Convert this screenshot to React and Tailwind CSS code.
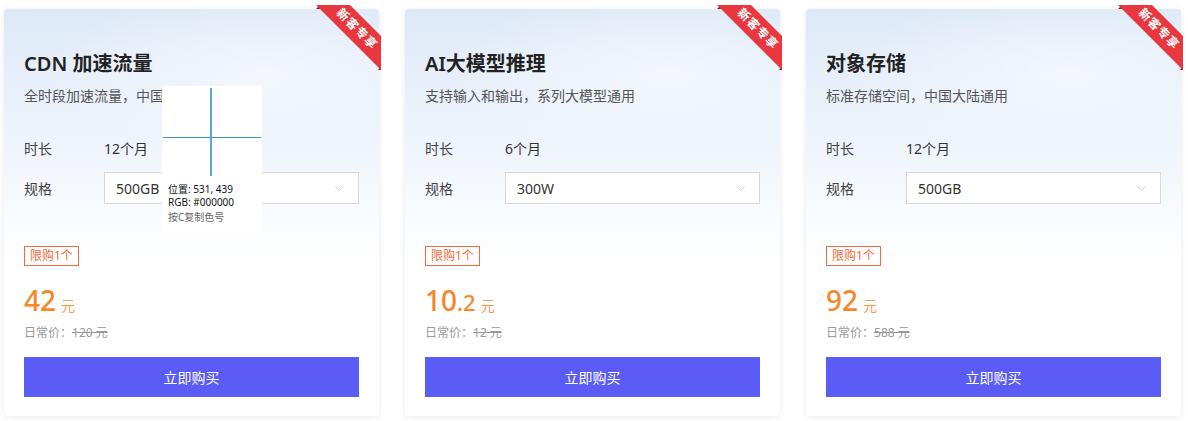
import { ChevronDown } from "lucide-react"

const plans = [
  { title: "CDN 加速流量", desc: "全时段加速流量，中国大陆通用", term: "12个月", spec: "500GB", price: "42", decimal: "", original: "120 元" },
  { title: "AI大模型推理", desc: "支持输入和输出，系列大模型通用", term: "6个月", spec: "300W", price: "10", decimal: ".2", original: "12 元" },
  { title: "对象存储", desc: "标准存储空间，中国大陆通用", term: "12个月", spec: "500GB", price: "92", decimal: "", original: "588 元" },
]

const Ribbon = () => (
  <div className="absolute -top-[4px] -right-[2px] w-[65px] h-[65px] overflow-hidden">
    <div className="absolute left-0 top-0 w-0 h-0 border-l-[4px] border-l-transparent border-b-[4px] border-b-[#9b1a1a]" />
    <div className="absolute right-0 bottom-0 w-0 h-0 border-t-[4px] border-t-transparent border-r-[3px] border-r-[#9b1a1a]" />
    <div className="absolute left-[-9px] top-[12px] w-[100px] h-[24px] rotate-45 bg-[#e8373e] flex items-center justify-center text-white text-[12px] font-bold tracking-[1px] leading-none">
      新客专享
    </div>
  </div>
)

function PlanCard({ plan }) {
  return (
    <div className="relative w-[375px] h-[407px] rounded-[4px] bg-white shadow-[0_1px_6px_rgba(0,0,0,0.09)]">
      <div className="absolute inset-0 rounded-[4px] bg-linear-to-b from-[#dde9f8] from-0% via-[#f0f5fc] via-35% to-white to-62%" />
      <div className="absolute inset-x-0 top-0 h-[160px] bg-[radial-gradient(ellipse_at_70%_40%,rgba(255,255,255,0.55),transparent_60%)]" />
      <Ribbon />
      <div className="relative px-[20px] pt-[41px] pb-[19px] flex flex-col">
        <h2 className="text-[20px] leading-[28px] font-semibold text-[#222]">{plan.title}</h2>
        <p className="mt-[8px] text-[14px] leading-[20px] text-[#555]">{plan.desc}</p>

        <div className="mt-[26px] flex items-center h-[32px] text-[14px] text-[#333]">
          <span className="w-[80px] text-[#444]">时长</span>
          <span>{plan.term}</span>
        </div>
        <div className="mt-[8px] flex items-center h-[32px] text-[14px] text-[#333]">
          <span className="w-[80px] text-[#444]">规格</span>
          <div className="flex-1 h-[32px] border border-[#d9d9d9] bg-white flex items-center justify-between pl-[11px] pr-[11px]">
            <span>{plan.spec}</span>
            <ChevronDown size={15} strokeWidth={1.2} className="text-[#bbb]" />
          </div>
        </div>

        <div className="mt-[42px] flex">
          <span className="h-[20px] px-[5px] border border-[#f06a3c] text-[#f06a3c] text-[12px] leading-[18px]">限购1个</span>
        </div>

        <div className="mt-[16px] h-[36px] flex items-baseline text-[#f5862b]">
          <span className="text-[28px] leading-[36px] font-medium">{plan.price}</span>
          {plan.decimal && <span className="text-[22px] font-medium">{plan.decimal}</span>}
          <span className="ml-[5px] text-[14px] text-[#f59a52]">元</span>
        </div>
        <div className="mt-[6px] text-[12px] leading-[18px] text-[#999]">
          日常价：<span className="line-through">{plan.original}</span>
        </div>

        <button className="mt-[15px] h-[40px] w-full bg-[#5b5bf6] text-white text-[14px]">立即购买</button>
      </div>
    </div>
  )
}

export default function App() {
  return (
    <div
      className="relative w-[1188px] h-[421px] bg-white pl-[4px] pt-[9px] flex gap-[26px]"
      style={{ fontFamily: '"Noto Sans", "Noto Sans CJK SC", sans-serif' }}
    >
      {plans.map((p) => (
        <PlanCard key={p.title} plan={p} />
      ))}

      {/* colour picker overlay captured in the screenshot */}
      <div className="absolute left-[162px] top-[86px] w-[100px] h-[148px] bg-white">
        <div className="absolute left-[48px] top-[2px] w-[2px] h-[88px] bg-[#5aa6d8]" />
        <div className="absolute left-[1px] top-[51px] w-[98px] h-[1px] bg-[#3f8fcc]" />
        <div className="absolute left-[6px] top-[97px] text-[10px] leading-[13px] text-[#111]">
          <div>位置: 531, 439</div>
          <div>RGB: #000000</div>
          <div className="mt-[2px] text-[#666]">按C复制色号</div>
        </div>
      </div>
    </div>
  )
}
